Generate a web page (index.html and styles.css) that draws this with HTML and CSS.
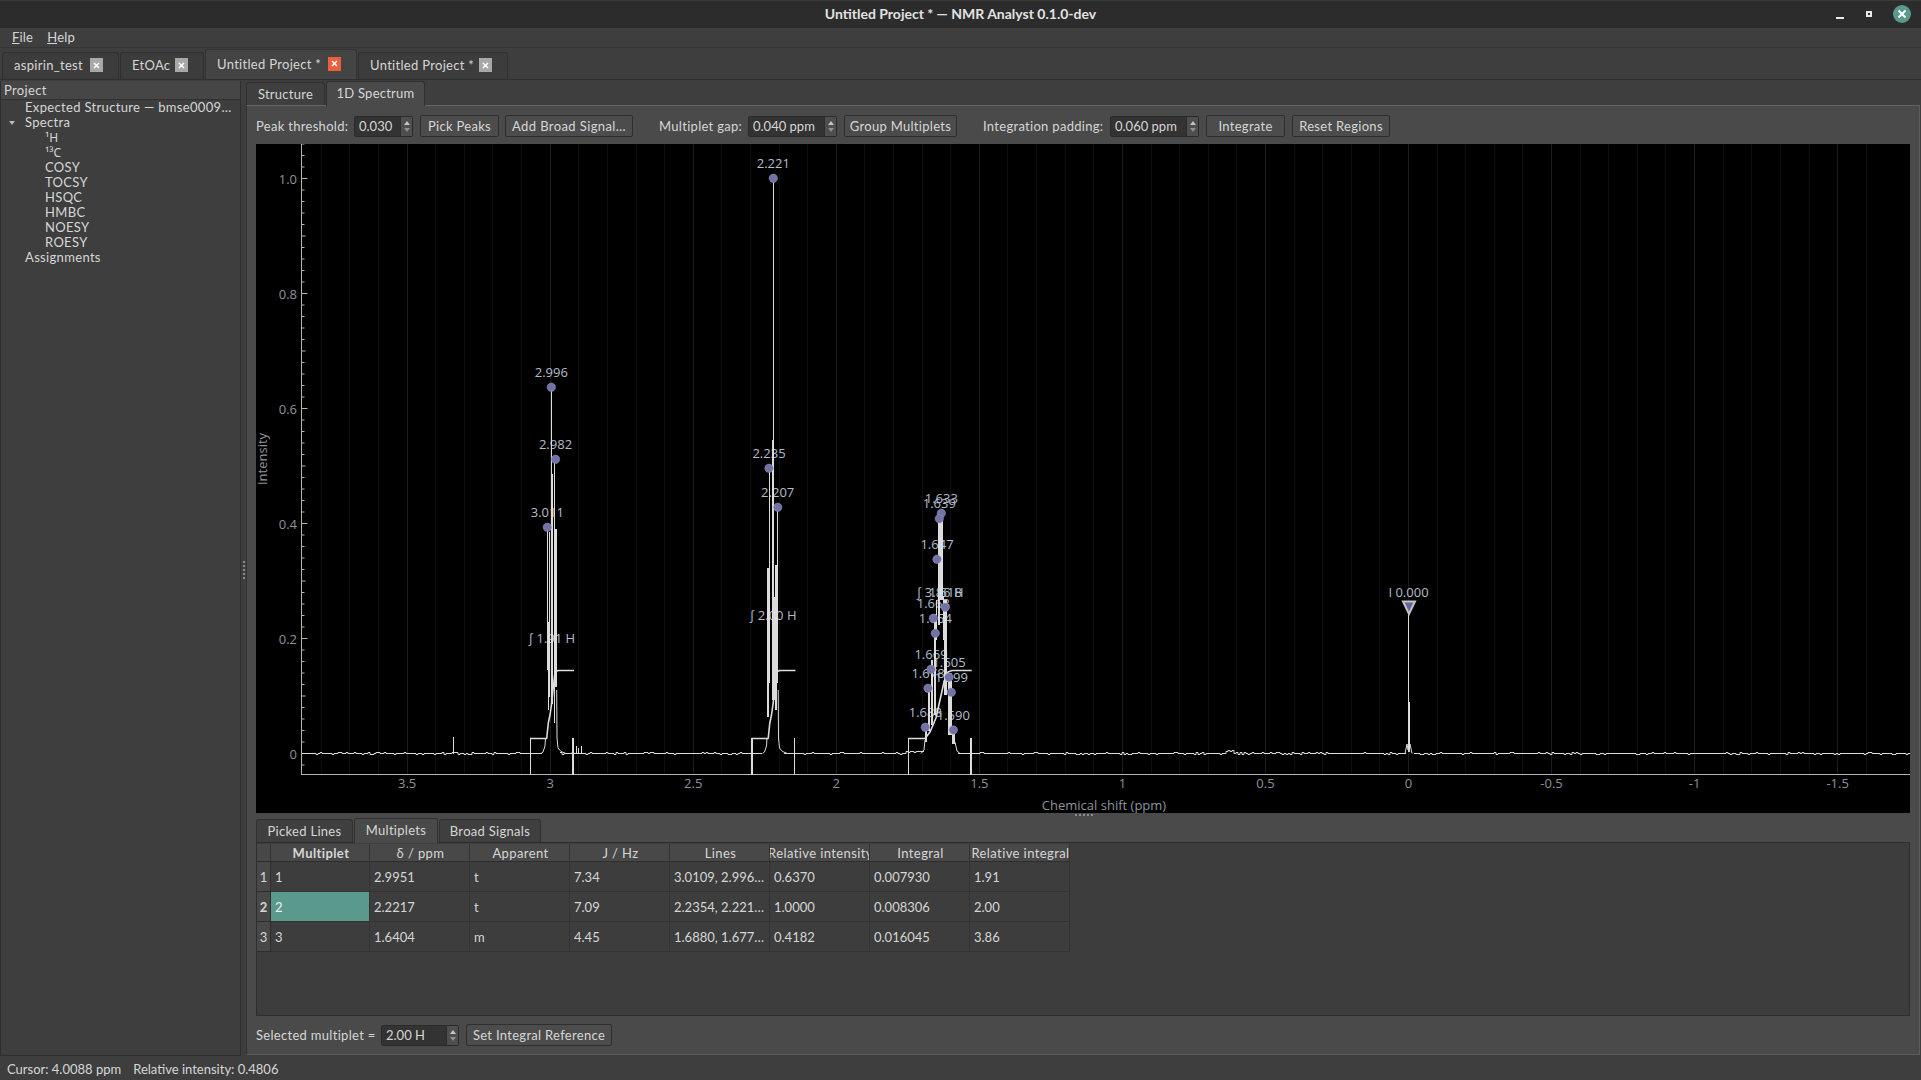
FILE: index.html
```html
<!DOCTYPE html>
<html lang="en">
<head>
<meta charset="UTF-8">
<title>Untitled Project * — NMR Analyst 0.1.0-dev</title>
<link rel="stylesheet" href="styles.css">
</head>
<body>

<div class="titlebar">
  <span class="title">Untitled Project * — NMR Analyst 0.1.0-dev</span>
  <div class="win-buttons">
    <span class="win-min"></span>
    <span class="win-max"></span>
    <span class="win-close">
      <svg width="10" height="10" viewBox="0 0 10 10"><path d="M1.5 1.5L8.5 8.5M8.5 1.5L1.5 8.5" stroke="#fff" stroke-width="2"/></svg>
    </span>
  </div>
</div>

<div class="menubar">
  <span class="menu-item"><u>F</u>ile</span>
  <span class="menu-item"><u>H</u>elp</span>
</div>

<div class="project-tabs">
  <div class="ptab ptab-1">aspirin_test <span class="tab-close"><svg width="7" height="7" viewBox="0 0 7 7"><path d="M1 1L6 6M6 1L1 6" stroke="#fff" stroke-width="1.5"/></svg></span></div>
  <div class="ptab ptab-2">EtOAc <span class="tab-close"><svg width="7" height="7" viewBox="0 0 7 7"><path d="M1 1L6 6M6 1L1 6" stroke="#fff" stroke-width="1.5"/></svg></span></div>
  <div class="ptab ptab-3 active">Untitled Project * <span class="tab-close red"><svg width="7" height="7" viewBox="0 0 7 7"><path d="M1 1L6 6M6 1L1 6" stroke="#fff" stroke-width="1.5"/></svg></span></div>
  <div class="ptab ptab-4">Untitled Project * <span class="tab-close"><svg width="7" height="7" viewBox="0 0 7 7"><path d="M1 1L6 6M6 1L1 6" stroke="#fff" stroke-width="1.5"/></svg></span></div>
</div>

<div class="main">
  <div class="sidebar">
    <div class="side-header">Project</div>
    <ul class="tree">
      <li class="lvl1">Expected Structure — bmse0009…</li>
      <li class="lvl1"><span class="tree-arrow"></span>Spectra</li>
      <li class="lvl2 nuclei">¹H</li>
      <li class="lvl2 nuclei">¹³C</li>
      <li class="lvl2">COSY</li>
      <li class="lvl2">TOCSY</li>
      <li class="lvl2">HSQC</li>
      <li class="lvl2">HMBC</li>
      <li class="lvl2">NOESY</li>
      <li class="lvl2">ROESY</li>
      <li class="lvl1">Assignments</li>
    </ul>
  </div>

  <div class="splitter-v"><span class="grip-v"></span></div>

  <div class="content">
    <div class="view-tabs">
      <div class="vtab vtab-1">Structure</div>
      <div class="vtab vtab-2 active">1D Spectrum</div>
    </div>

    <div class="pane">
      <div class="toolbar">
        <span class="lbl lbl-peak">Peak threshold:</span>
        <div class="spin spin-peak"><span class="spin-val">0.030</span><span class="spin-arrows"><i class="up"></i><i class="down"></i></span></div>
        <button class="btn btn-pick">Pick Peaks</button>
        <button class="btn btn-broad">Add Broad Signal…</button>
        <span class="lbl lbl-gap">Multiplet gap:</span>
        <div class="spin spin-gap"><span class="spin-val">0.040 ppm</span><span class="spin-arrows"><i class="up"></i><i class="down"></i></span></div>
        <button class="btn btn-group">Group Multiplets</button>
        <span class="lbl lbl-pad">Integration padding:</span>
        <div class="spin spin-pad"><span class="spin-val">0.060 ppm</span><span class="spin-arrows"><i class="up"></i><i class="down"></i></span></div>
        <button class="btn btn-integrate">Integrate</button>
        <button class="btn btn-reset">Reset Regions</button>
      </div>

      <div class="plot" id="plot"></div>

      <div class="splitter-h"><span class="grip-h"></span></div>

      <div class="result-tabs">
        <div class="rtab rtab-1">Picked Lines</div>
        <div class="rtab rtab-2 active">Multiplets</div>
        <div class="rtab rtab-3">Broad Signals</div>
      </div>

      <div class="table-frame">
        <div class="table">
          <div class="th corner"></div>
          <div class="th bold"><span>Multiplet</span></div>
          <div class="th"><span>δ / ppm</span></div>
          <div class="th"><span>Apparent</span></div>
          <div class="th"><span>J / Hz</span></div>
          <div class="th"><span>Lines</span></div>
          <div class="th"><span>Relative intensity</span></div>
          <div class="th"><span>Integral</span></div>
          <div class="th"><span>Relative integral</span></div>

          <div class="rh">1</div>
          <div class="td">1</div><div class="td">2.9951</div><div class="td">t</div><div class="td">7.34</div><div class="td">3.0109, 2.996…</div><div class="td">0.6370</div><div class="td">0.007930</div><div class="td">1.91</div>

          <div class="rh bold">2</div>
          <div class="td selected">2</div><div class="td">2.2217</div><div class="td">t</div><div class="td">7.09</div><div class="td">2.2354, 2.221…</div><div class="td">1.0000</div><div class="td">0.008306</div><div class="td">2.00</div>

          <div class="rh">3</div>
          <div class="td">3</div><div class="td">1.6404</div><div class="td">m</div><div class="td">4.45</div><div class="td">1.6880, 1.677…</div><div class="td">0.4182</div><div class="td">0.016045</div><div class="td">3.86</div>
        </div>
      </div>

      <div class="bottom-row">
        <span class="lbl lbl-sel">Selected multiplet =</span>
        <div class="spin spin-sel"><span class="spin-val">2.00 H</span><span class="spin-arrows"><i class="up"></i><i class="down"></i></span></div>
        <button class="btn btn-ref">Set Integral Reference</button>
      </div>
    </div>
  </div>
</div>

<div class="statusbar">
  <span class="status-cursor">Cursor: 4.0088 ppm</span>
  <span class="status-int">Relative intensity: 0.4806</span>
</div>

<script src="plot.js"></script>
</body>
</html>
```

FILE: styles.css
```css
* {
  box-sizing: border-box;
}

body {
  margin: 0;
  width: 1921px;
  height: 1080px;
  overflow: hidden;
  display: flex;
  flex-direction: column;
  background-color: #3e3e3e;
  color: #d6d6d6;
  font-family: "Lato", "Open Sans", sans-serif;
  font-size: 13px;
}

/* title bar */
.titlebar {
  height: 28px;
  flex: none;
  position: relative;
  background-color: #2c2c2c;
  border-top: 1px solid #3a3a3a;
  display: flex;
  align-items: center;
  justify-content: center;
}

.title {
  color: #e2e2e2;
  font-weight: 700;
  font-size: 14px;
  margin-top: -2px;
}

.win-buttons {
  position: absolute;
  right: 10px;
  top: 4px;
  display: flex;
  align-items: center;
}

.win-min {
  width: 8px;
  height: 2px;
  background-color: #e8e8e8;
  margin-top: 7px;
  margin-right: 22px;
}

.win-max {
  width: 6px;
  height: 6px;
  border: 2px solid #e8e8e8;
  margin-right: 21px;
}

.win-close {
  width: 18px;
  height: 18px;
  border-radius: 50%;
  background-color: #5a9a8c;
  display: flex;
  align-items: center;
  justify-content: center;
}

/* menu */
.menubar {
  height: 20px;
  flex: none;
  display: flex;
  align-items: center;
  padding-left: 12px;
  padding-bottom: 2px;
  gap: 14px;
  letter-spacing: 0.2px;
  background-color: #3e3e3e;
  border-bottom: 1px solid #353535;
}

/* project tabs */
.project-tabs {
  height: 32px;
  flex: none;
  display: flex;
  align-items: flex-end;
  padding-left: 2px;
  border-bottom: 1px solid #2e2e2e;
  background-color: #3e3e3e;
  letter-spacing: 0.3px;
}

.ptab {
  height: 27px;
  display: flex;
  align-items: center;
  justify-content: space-between;
  padding: 0 15px 2px 11px;
  border: 1px solid #303030;
  border-bottom: none;
  border-radius: 3px 3px 0 0;
  margin-right: 1px;
  background-color: #3c3c3c;
}

.ptab.active {
  height: 30px;
  background-color: #444444;
  border-color: #333333;
  padding-bottom: 2px;
}

.ptab-1 { width: 117px; }
.ptab-2 { width: 84px; }
.ptab-3 { width: 152px; }
.ptab-4 { width: 150px; }

.tab-close {
  width: 13px;
  height: 14px;
  background-color: #a8a8a8;
  display: flex;
  align-items: center;
  justify-content: center;
}

.tab-close.red {
  background-color: #e8603c;
}

/* main area */
.main {
  flex: 1;
  display: flex;
  min-height: 0;
}

.sidebar {
  width: 241px;
  flex: none;
  background-color: #3e3e3e;
  border-left: 1px solid #2e2e2e;
  border-right: 1px solid #2e2e2e;
  border-bottom: 1px solid #2e2e2e;
  margin-top: 1px;
  letter-spacing: 0.33px;
}

.side-header {
  height: 19px;
  padding-left: 3px;
  line-height: 18px;
  background-color: #464646;
  border-bottom: 1px solid #303030;
}

.tree {
  list-style-type: none;
  margin: 0;
  padding: 0;
}

.tree li {
  height: 15px;
  line-height: 15px;
  white-space: nowrap;
  position: relative;
}

.tree .nuclei {
  font-family: "Noto Sans", sans-serif;
  font-size: 12px;
  letter-spacing: 0;
}

.lvl1 { padding-left: 24px; }
.lvl2 { padding-left: 44px; }

.tree-arrow {
  position: absolute;
  left: 8px;
  top: 6px;
  border-left: 3.5px solid transparent;
  border-right: 3.5px solid transparent;
  border-top: 4px solid #b8b8b8;
}

.splitter-v {
  width: 5px;
  flex: none;
  display: flex;
  align-items: center;
  justify-content: center;
  padding-top: 4px;
}

.grip-v {
  width: 1px;
  height: 18px;
  border-left: 2px dotted #8a8a8a;
}

.content {
  flex: 1;
  min-width: 0;
  display: flex;
  flex-direction: column;
}

/* inner tabs */
.view-tabs {
  height: 25px;
  flex: none;
  display: flex;
  align-items: flex-end;
  position: relative;
  z-index: 1;
  letter-spacing: 0.25px;
}

.vtab {
  height: 23px;
  display: flex;
  align-items: center;
  justify-content: center;
  border: 1px solid #303030;
  border-bottom: none;
  border-radius: 3px 3px 0 0;
  margin-right: 1px;
  background-color: #3f3f3f;
}

.vtab.active {
  height: 25px;
  background-color: #4a4a4a;
  margin-bottom: -1px;
  padding-bottom: 2px;
}

.vtab-1 { width: 79px; }
.vtab-2 { width: 99px; }

.pane {
  flex: 1;
  min-height: 0;
  margin-right: 1px;
  margin-bottom: 1px;
  background-color: #4a4a4a;
  border: 1px solid #5c5c5c;
  border-top-color: #646464;
  border-left-color: #333333;
  display: flex;
  flex-direction: column;
  padding: 0 9px;
}

.toolbar {
  height: 38px;
  flex: none;
  display: flex;
  align-items: center;
  padding-top: 2px;
}

.lbl {
  white-space: nowrap;
  letter-spacing: 0.3px;
}

.lbl-peak { width: 98px; }
.lbl-gap { width: 89px; margin-left: 26px; }
.lbl-pad { width: 127px; margin-left: 26px; }
.lbl-sel { width: 125px; }

.spin {
  height: 21px;
  display: flex;
  justify-content: space-between;
  background-color: #333333;
  border: 1px solid #2a2a2a;
  border-radius: 2px;
  padding-left: 4px;
  line-height: 19px;
}

.spin-peak { width: 59px; }
.spin-gap { width: 89px; }
.spin-pad { width: 89px; }
.spin-sel { width: 78px; }

.spin-arrows {
  width: 12px;
  background-color: #4e4e4e;
  border-left: 1px solid #2c2c2c;
  display: flex;
  flex-direction: column;
  align-items: center;
  justify-content: center;
  gap: 3px;
}

.spin-arrows .up {
  border-left: 3.5px solid transparent;
  border-right: 3.5px solid transparent;
  border-bottom: 4px solid #c4c4c4;
}

.spin-arrows .down {
  border-left: 3.5px solid transparent;
  border-right: 3.5px solid transparent;
  border-top: 4px solid #8e8e8e;
}

.btn {
  height: 22px;
  padding: 0;
  font: inherit;
  letter-spacing: 0.3px;
  color: #d6d6d6;
  white-space: nowrap;
  background-color: #4c4c4c;
  border: 1px solid #2e2e2e;
  border-radius: 2px;
}

.btn-pick { width: 79px; margin-left: 7px; }
.btn-broad { width: 128px; margin-left: 6px; letter-spacing: 0.4px; }
.btn-group { width: 113px; margin-left: 7px; }
.btn-integrate { width: 79px; margin-left: 7px; }
.btn-reset { width: 98px; margin-left: 7px; }
.btn-ref { width: 146px; margin-left: 7px; }

/* plot */
.plot {
  height: 669px;
  flex: none;
  background-color: #000000;
}

.plot svg {
  display: block;
}

.plot text {
  font-family: "Open Sans", sans-serif;
  font-size: 13px;
}

.splitter-h {
  height: 5px;
  flex: none;
  display: flex;
  justify-content: center;
  padding-left: 2px;
}

.grip-h {
  width: 18px;
  height: 1px;
  margin-top: 1px;
  border-top: 2px dotted #8a8a8a;
}

/* results table */
.result-tabs {
  height: 24px;
  flex: none;
  display: flex;
  align-items: flex-end;
  position: relative;
  z-index: 1;
  letter-spacing: 0.3px;
}

.rtab {
  height: 23px;
  display: flex;
  align-items: center;
  justify-content: center;
  border: 1px solid #303030;
  border-bottom: none;
  border-radius: 3px 3px 0 0;
  margin-right: 1px;
  background-color: #3f3f3f;
}

.rtab.active {
  height: 25px;
  background-color: #4a4a4a;
  margin-bottom: -1px;
  padding-bottom: 2px;
}

.rtab-1 { width: 97px; }
.rtab-2 { width: 84px; }
.rtab-3 { width: 102px; }

.table-frame {
  height: 174px;
  flex: none;
  background-color: #3d3d3d;
  border: 1px solid #2e2e2e;
  padding-top: 1px;
}

.table {
  display: grid;
  grid-template-columns: 14px 99px repeat(7, 100px);
  grid-template-rows: 18px repeat(3, 30px);
  width: 813px;
}

.th {
  display: flex;
  justify-content: center;
  align-items: center;
  overflow: hidden;
  white-space: nowrap;
  letter-spacing: 0.4px;
  padding-left: 2px;
  background-color: #484848;
  border-right: 1px solid #333333;
  border-bottom: 1px solid #2e2e2e;
}

.th span {
  flex: none;
}

.rh {
  display: flex;
  align-items: center;
  justify-content: center;
  background-color: #484848;
  border-right: 1px solid #2e2e2e;
  border-bottom: 1px solid #2e2e2e;
}

.bold {
  font-weight: 700;
}

.td {
  display: flex;
  align-items: center;
  padding-left: 4px;
  overflow: hidden;
  white-space: nowrap;
  border-right: 1px solid #333333;
  border-bottom: 1px solid #333333;
}

.td.selected {
  background-color: #5a9a8c;
  color: #f0f0f0;
}

.bottom-row {
  flex: 1;
  display: flex;
  align-items: center;
}

.statusbar {
  height: 24px;
  flex: none;
  display: flex;
  align-items: center;
  padding-left: 7px;
  padding-top: 2px;
  background-color: #3e3e3e;
}

.status-int {
  margin-left: 12px;
}
```

FILE: plot.js
```js
// draws the 1D spectrum into #plot, all numbers are page pixels
const SVG_NS = 'http://www.w3.org/2000/svg';
const plotEl = document.getElementById('plot');
const svg = document.createElementNS(SVG_NS, 'svg');
svg.setAttribute('width', 1654);
svg.setAttribute('height', 669);
svg.setAttribute('viewBox', '256 144 1654 669');
plotEl.appendChild(svg);

const AXIS_X = 301.5;
const AXIS_Y = 774.5;
const BASE_Y = 753.5;
const LINE = '#dcdcdc';
const LABEL = '#b4bec8';
const TICK_LABEL = '#8d949c';

function ppmX(ppm) {
  return 1408.5 - 286.1 * ppm;
}

function intensityY(v) {
  return BASE_Y - 575 * v;
}

function add(tag, attrs, text) {
  const el = document.createElementNS(SVG_NS, tag);
  for (const key in attrs) {
    el.setAttribute(key, attrs[key]);
  }
  if (text) el.textContent = text;
  svg.appendChild(el);
  return el;
}

function vline(x, y1, y2, color, width) {
  add('line', { x1: x, y1: y1, x2: x, y2: y2, stroke: color, 'stroke-width': width || 1, 'shape-rendering': 'crispEdges' });
}

function poly(points, width) {
  add('polyline', {
    points: points.map(p => p.join(',')).join(' '),
    fill: 'none',
    stroke: LINE,
    'stroke-width': width || 1,
    'stroke-linejoin': 'round'
  });
}

function label(x, y, text, color) {
  add('text', { x: x, y: y + 4.5, 'text-anchor': 'middle', fill: color || LABEL }, text);
}

// grid
for (let i = -16; i <= 38; i++) {
  const x = ppmX(i / 10);
  if (x <= AXIS_X) continue;
  vline(x, 144, AXIS_Y, i % 5 === 0 ? '#1c1c1c' : '#0f0f0f');
}

// axes
vline(AXIS_X, 144, AXIS_Y, '#b4b4b4');
add('line', { x1: AXIS_X, y1: AXIS_Y, x2: 1910, y2: AXIS_Y, stroke: '#b4b4b4' });

for (let i = -1; i <= 53; i++) {
  const y = intensityY(i * 0.02);
  const len = i % 10 === 0 ? 6 : (i % 5 === 0 ? 4 : 3);
  add('line', { x1: AXIS_X, y1: y, x2: AXIS_X + len, y2: y, stroke: '#b4b4b4' });
}

['0', '0.2', '0.4', '0.6', '0.8', '1.0'].forEach(function(t, i) {
  add('text', { x: 297, y: intensityY(i * 0.2) + 5, 'text-anchor': 'end', fill: TICK_LABEL }, t);
});

[['3.5', 3.5], ['3', 3], ['2.5', 2.5], ['2', 2], ['1.5', 1.5], ['1', 1], ['0.5', 0.5], ['0', 0],
 ['-0.5', -0.5], ['-1', -1], ['-1.5', -1.5]].forEach(function(t) {
  add('text', { x: ppmX(t[1]), y: 788, 'text-anchor': 'middle', fill: TICK_LABEL }, t[0]);
});

add('text', { x: 1104, y: 810, 'text-anchor': 'middle', fill: TICK_LABEL }, 'Chemical shift (ppm)');
add('text', { x: 0, y: 0, 'text-anchor': 'middle', fill: TICK_LABEL, transform: 'translate(267 459) rotate(-90)' }, 'Intensity');

// peak labels go under the trace
const dots = [
  ['2.996', 551.3, 387.3], ['2.982', 555.5, 459.3], ['3.011', 547.3, 527.3],
  ['2.221', 773.3, 178.3], ['2.235', 769, 468.3], ['2.207', 777.7, 507.3],
  ['1.633', 941.3, 513.3], ['1.639', 939.3, 518.7], ['1.647', 937, 559.3],
  ['1.618', 945.3, 607.3], ['1.663', 933.3, 618.3], ['1.654', 935.3, 633.3],
  ['1.669', 931, 669.3], ['1.605', 949, 677.3], ['1.678', 928, 688.3],
  ['1.599', 951.3, 692.3], ['1.688', 925.3, 727.3], ['1.590', 953.3, 730]
];
dots.forEach(d => label(d[1], d[2] - 15, d[0]));
label(551.7, 638.7, '∫ 1.91 H');
label(773, 615.7, '∫ 2.00 H');
label(940, 592.7, '∫ 3.86 H');
label(1408.5, 592.7, 'I 0.000');

// baseline noise, drawn as steps so it stays sharp
let seed = 71;
function rnd() {
  seed = (seed * 1103 + 12345) % 65536;
  return seed / 65536;
}
let noise = [];
for (let x = 302; x < 1910; x += 2) {
  const inPeak = (x > 541 && x < 560) || (x > 760 && x < 783) || (x > 922 && x < 958) || (x > 1404 && x < 1413);
  if (inPeak) {
    if (noise.length) poly(noise, 1);
    noise = [];
    continue;
  }
  let y = BASE_Y + (rnd() > 0.75 ? (rnd() > 0.5 ? 1 : -1) : 0);
  if (x > 905 && x <= 922) y -= 2;
  if (x > 1224 && x < 1234) y -= 2;
  noise.push([x, y], [x + 2, y]);
}
poly(noise, 1);

// first triplet, second triplet uses the same shape
function triplet(dx, segs) {
  segs.forEach(s => vline(s[0] + dx, s[1], s[2], LINE, s[3]));
  poly([[541 + dx, BASE_Y], [543 + dx, 752], [545 + dx, 746], [545.5 + dx, 738]], 1);
  poly([[556.7 + dx, 690], [557 + dx, 738], [558 + dx, 748], [561 + dx, 751.5], [566 + dx, BASE_Y]], 1);
  // integral curve
  poly([[530 + dx, 738.5], [546.7 + dx, 738.5], [548.3 + dx, 723], [550 + dx, 715], [551.7 + dx, 703],
        [553.3 + dx, 687], [555 + dx, 672], [558 + dx, 670.5], [574 + dx, 670.5]], 1.6);
}

triplet(0, [
  [551.3, 387, 700, 1], [552.4, 474, 704, 2], [554.3, 459, 723, 1], [556, 529, 687, 2],
  [547.7, 527, 670, 1], [549.5, 532, 697, 1], [548.3, 622, 710, 1]
]);
vline(530, 738, AXIS_Y, LINE, 1);
vline(572.7, 738, AXIS_Y, LINE, 2);
vline(576.5, 746, 753, LINE, 1);
vline(578.5, 748, 753, LINE, 1);
vline(581, 746, 753, LINE, 1);

triplet(221.5, [
  [551.8, 178, 680, 1], [551.2, 440, 700, 2], [552.8, 597, 700, 1], [547.5, 468, 683, 1],
  [546.8, 568, 717, 2], [556.2, 507, 683, 1], [554.5, 565, 710, 2]
]);
vline(751.7, 738, AXIS_Y, LINE, 2);
vline(794.3, 738, AXIS_Y, LINE, 1);

// third multiplet
[
  [940.5, 512, 600, 5], [938.5, 560, 625, 2], [945.3, 600, 695, 3],
  [934.8, 618, 715, 2.5], [932.4, 660, 725, 2], [929, 689, 731, 1.5], [926, 727, 742, 2],
  [950.2, 680, 735, 3.5], [953.5, 730, 744, 3], [943.3, 596, 640, 1], [936, 600, 640, 1]
].forEach(s => vline(s[0], s[1], s[2], LINE, s[3]));
poly([[908.3, 738.5], [925, 738.5], [930, 732], [936, 718], [940, 700], [944, 682], [948, 672], [952, 670.5], [971.7, 670.5]], 1.6);
poly([[925, 740], [924, 750], [921, BASE_Y]], 1);
poly([[955, 742], [957, 751], [960, BASE_Y]], 1);
vline(908.3, 738, AXIS_Y, LINE, 1);
vline(970.7, 738, AXIS_Y, LINE, 2);

// small impurity spikes and the TMS line
vline(453.5, 737, BASE_Y, LINE, 1);
vline(1408.5, 612, 752, LINE, 1);
vline(1409.3, 702, 752, LINE, 2);
poly([[1405, BASE_Y], [1407, 744], [1408, 750], [1410, 744], [1412, BASE_Y]], 1);

// peak markers
dots.forEach(d => add('circle', { cx: d[1], cy: d[2], r: 4.2, fill: '#7272a6', stroke: '#9a9abc', 'stroke-width': 0.5 }));
add('polygon', { points: '1403,601.5 1415,601.5 1409,614', fill: '#66669e', stroke: '#c4c4c4', 'stroke-width': 2 });
```
